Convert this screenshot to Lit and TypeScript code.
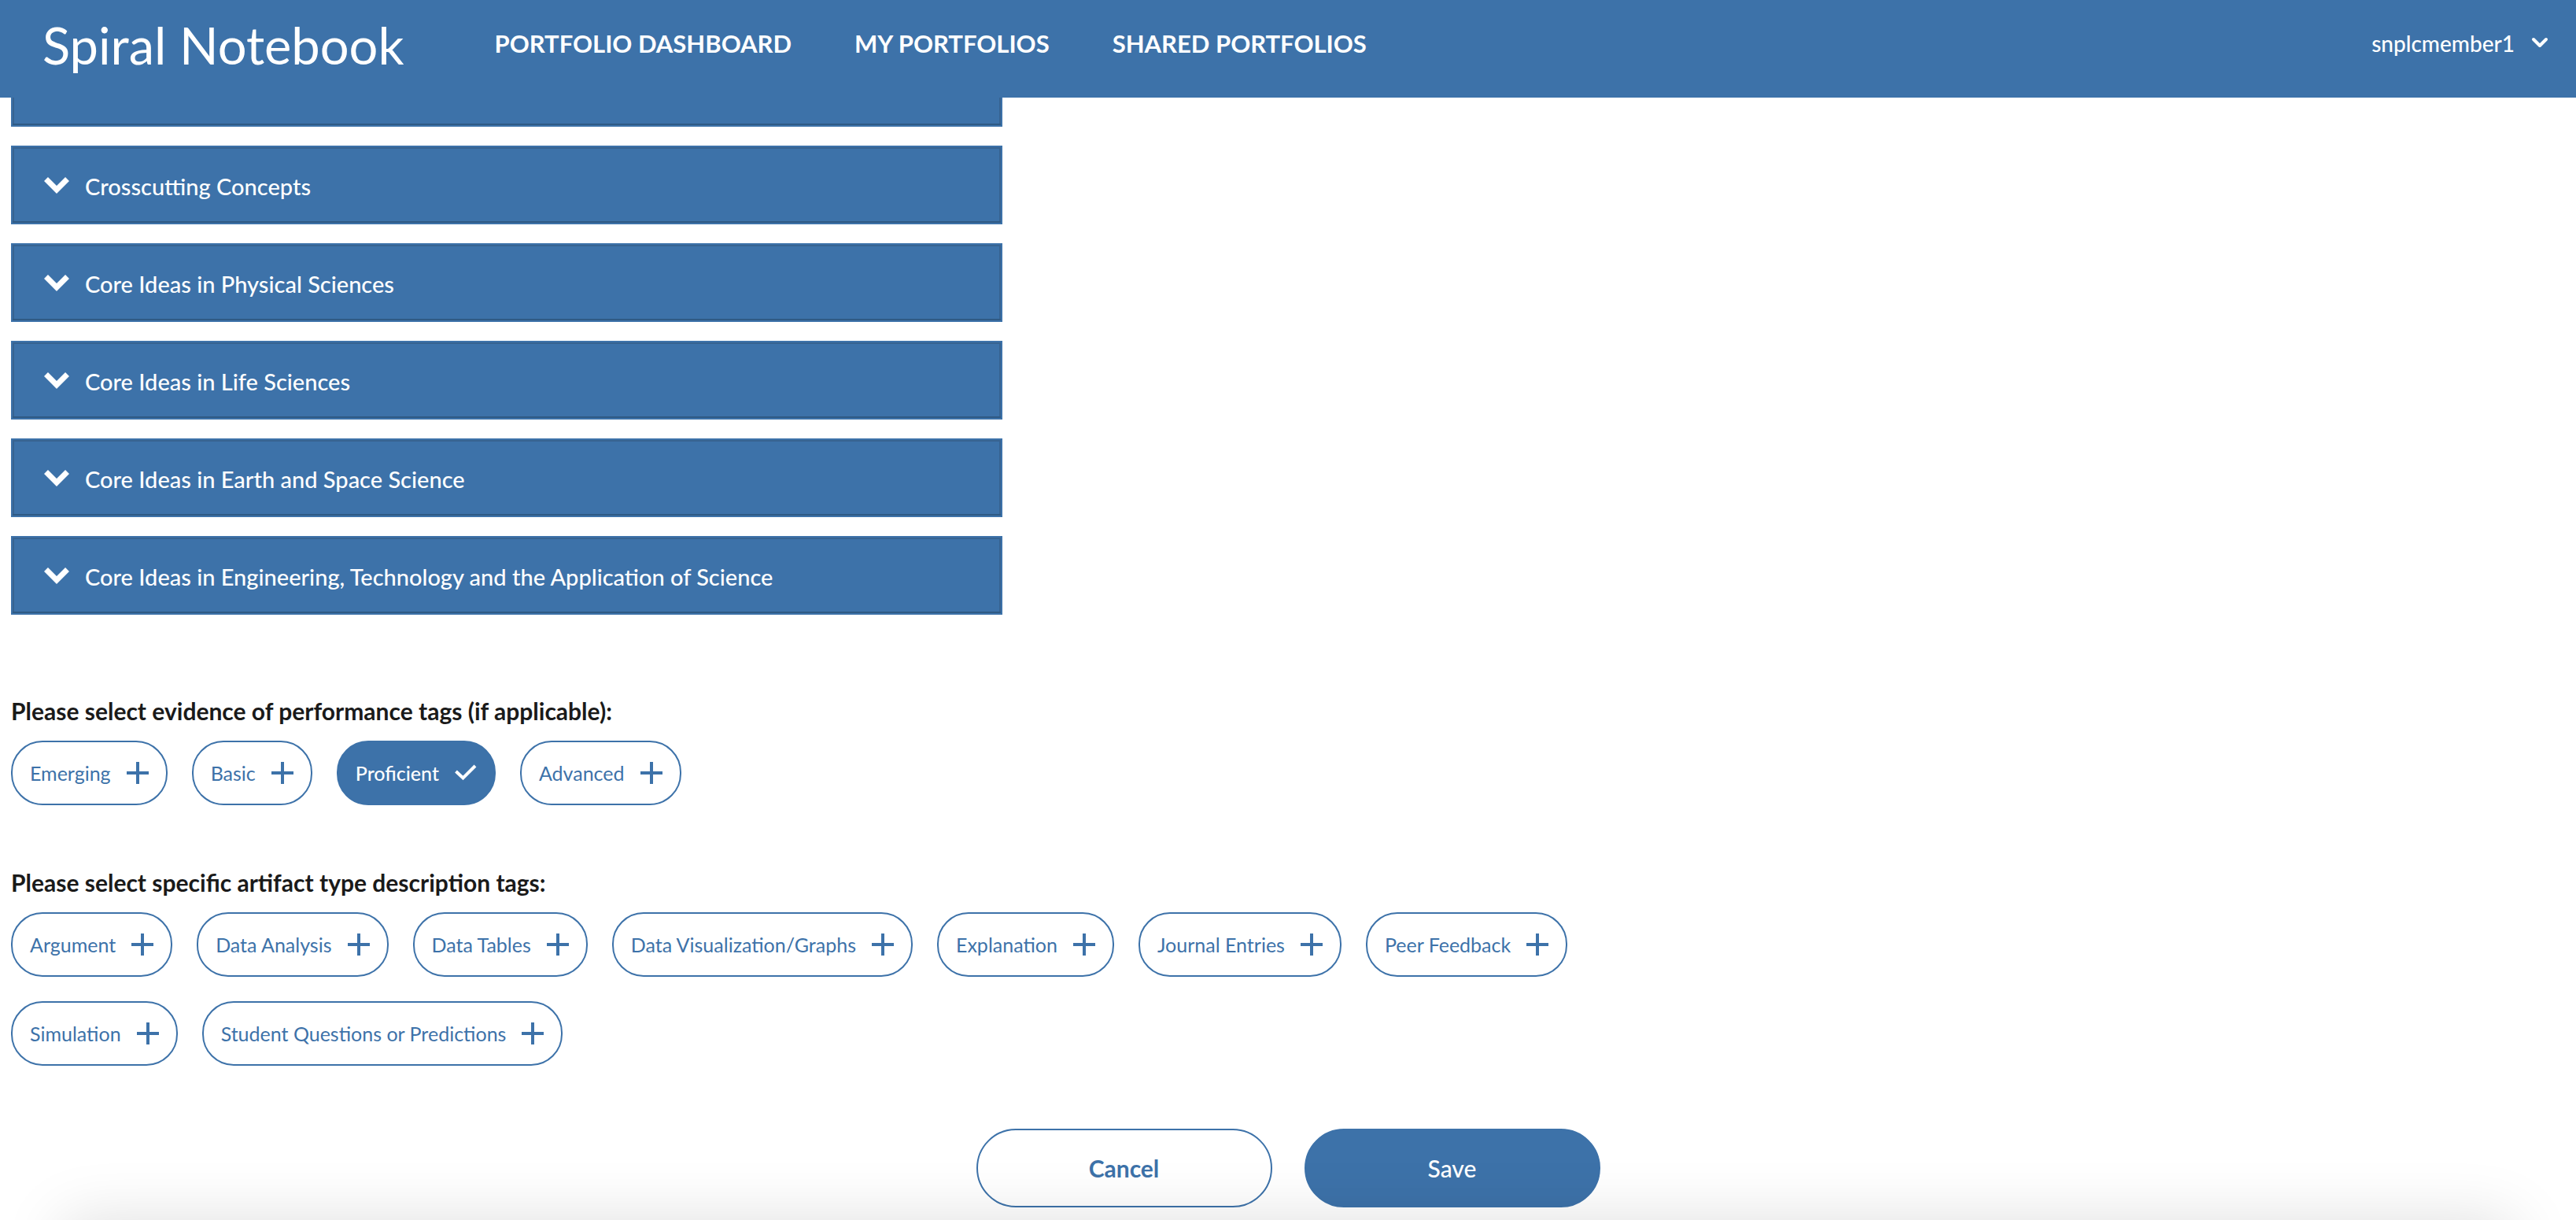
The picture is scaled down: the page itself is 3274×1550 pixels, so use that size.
import { LitElement, html, css, svg } from "lit";
import { customElement, property, state } from "lit/decorators.js";
import { classMap } from "lit/directives/class-map.js";

const plusIcon = svg`<path d="M14 0v28M0 14h28" />`;
const checkIcon = svg`<path d="M1.5 12l9 8.500L26 5" />`;

@customElement("site-header")
export class SiteHeader extends LitElement {
  static styles = css`
    :host {
      display: block;
    }
    .bar {
      display: flex;
      align-items: center;
      box-sizing: border-box;
      height: 124px;
      padding: 0 34px 14px 54px;
      background: var(--brand);
      color: #fff;
    }
    .brand {
      padding-top: 4px;
      font-size: 65px;
      line-height: 76px;
      color: inherit;
      text-decoration: none;
    }
    .nav {
      display: flex;
      gap: 80px;
      margin-left: 115px;
    }
    .link {
      font-size: 31px;
      font-weight: 700;
      line-height: 38px;
      color: inherit;
      text-decoration: none;
      text-transform: uppercase;
    }
    .user {
      display: flex;
      align-items: center;
      gap: 20px;
      margin-left: auto;
      padding: 0;
      border: 0;
      background: none;
      color: inherit;
      font: inherit;
      font-size: 28px;
      font-weight: 500;
      line-height: 38px;
      cursor: pointer;
    }
    .caret {
      width: 24px;
      height: 16px;
      fill: none;
      stroke: currentColor;
      stroke-width: 4;
      stroke-linecap: round;
      stroke-linejoin: round;
    }
  `;

  render() {
    return html`
      <header class="bar">
        <a class="brand" href="#">Spiral Notebook</a>
        <nav class="nav">
          <a class="link" href="#">Portfolio Dashboard</a>
          <a class="link" href="#">My Portfolios</a>
          <a class="link" href="#">Shared Portfolios</a>
        </nav>
        <button class="user" type="button">
          snplcmember1
          <svg class="caret" viewBox="0 0 24 16" aria-hidden="true">
            <path d="M4 3l8 8 8-8" />
          </svg>
        </button>
      </header>
    `;
  }
}

@customElement("tag-group")
export class TagGroup extends LitElement {
  @property() heading = "";
  @property({ attribute: false }) tags: string[] = [];
  @property({ attribute: false }) selected: string[] = [];

  static styles = css`
    :host {
      display: block;
    }
    .heading {
      margin: 0 0 20px;
      font-size: 30px;
      font-weight: 700;
      line-height: 36px;
      color: #1a1a1a;
    }
    .tags {
      display: flex;
      flex-wrap: wrap;
      gap: 31px;
      max-width: 64%;
    }
    .tag {
      display: flex;
      align-items: center;
      gap: 20px;
      box-sizing: border-box;
      height: 82px;
      padding: 0 22px;
      border: 2px solid var(--brand);
      border-radius: 40px;
      background: #fff;
      color: var(--brand);
      font: inherit;
      font-size: 25px;
      line-height: 30px;
      cursor: pointer;
    }
    .on {
      background: var(--brand);
      color: #fff;
      font-weight: 500;
    }
    .icon {
      flex: none;
      width: 28px;
      height: 28px;
      fill: none;
      stroke: currentColor;
      stroke-width: 4;
    }
  `;

  private toggle(tag: string) {
    this.selected = this.selected.includes(tag)
      ? this.selected.filter((t) => t !== tag)
      : [...this.selected, tag];
  }

  render() {
    return html`
      <h2 class="heading">${this.heading}</h2>
      <div class="tags">
        ${this.tags.map((tag) => {
          const on = this.selected.includes(tag);
          return html`
            <button
              type="button"
              class=${classMap({ tag: true, on })}
              aria-pressed=${on ? "true" : "false"}
              @click=${() => this.toggle(tag)}
            >
              ${tag}
              <svg class="icon" viewBox="0 0 28 28" aria-hidden="true">
                ${on ? checkIcon : plusIcon}
              </svg>
            </button>
          `;
        })}
      </div>
    `;
  }
}

@customElement("app-root")
export class AppRoot extends LitElement {
  @state() private sections = [
    "Crosscutting Concepts",
    "Core Ideas in Physical Sciences",
    "Core Ideas in Life Sciences",
    "Core Ideas in Earth and Space Science",
    "Core Ideas in Engineering, Technology and the Application of Science",
  ];

  static styles = css`
    :host {
      --brand: #3d72a9;
      --edge: #376391;
      --edge-dark: #2f5a84;
      display: block;
      background: #fff;
      font-family: Lato, "Liberation Sans", sans-serif;
    }
    .main {
      display: flex;
      flex-direction: column;
      padding: 0 14px 16px;
    }
    .sections {
      display: flex;
      flex-direction: column;
      gap: 24px;
      max-width: 1260px;
      margin-bottom: 104px;
    }
    .tail,
    .section {
      box-sizing: border-box;
      border: 2px solid var(--brand);
      background: var(--brand);
    }
    .tail {
      height: 37px;
      border-top: 0;
      box-shadow: inset 0 -2px var(--edge-dark), inset 2px 0 var(--edge),
        inset -2px 0 var(--edge);
    }
    .section {
      display: flex;
      align-items: center;
      gap: 20px;
      width: 100%;
      height: 100px;
      padding: 0 40px;
      box-shadow: inset 0 -2px var(--edge-dark), inset 0 0 0 2px var(--edge);
      color: #fff;
      font: inherit;
      font-size: 29px;
      font-weight: 500;
      line-height: 36px;
      text-align: left;
      cursor: pointer;
    }
    .label {
      padding-top: 3px;
    }
    .chevron {
      flex: none;
      width: 32px;
      height: 21px;
      fill: none;
      stroke: currentColor;
      stroke-width: 7;
    }
    .group + .group {
      margin-top: 80px;
    }
    .actions {
      display: flex;
      justify-content: center;
      gap: 41px;
      margin-top: 80px;
    }
    .action {
      box-sizing: border-box;
      width: 376px;
      height: 100px;
      border: 2px solid var(--brand);
      border-radius: 50px;
      font: inherit;
      font-size: 30px;
      line-height: 36px;
      cursor: pointer;
    }
    .cancel {
      background: #fff;
      color: var(--brand);
      font-weight: 700;
    }
    .save {
      background: var(--brand);
      color: #fff;
      font-weight: 500;
    }
    .footer-shade {
      position: fixed;
      top: 100%;
      left: 80px;
      right: 80px;
      height: 200px;
      box-shadow: 0 0 80px rgba(0, 0, 0, 0.13);
      pointer-events: none;
    }
  `;

  render() {
    return html`
      <site-header></site-header>
      <main class="main">
        <div class="sections">
          <div class="tail"></div>
          ${this.sections.map(
            (name) => html`
              <button class="section" type="button" aria-expanded="false">
                <svg class="chevron" viewBox="0 0 32 21" aria-hidden="true">
                  <path d="M2.500 2.500L16 16 29.500 2.500" />
                </svg>
                <span class="label">${name}</span>
              </button>
            `
          )}
        </div>
        <tag-group
          class="group"
          heading="Please select evidence of performance tags (if applicable):"
          .tags=${["Emerging", "Basic", "Proficient", "Advanced"]}
          .selected=${["Proficient"]}
        ></tag-group>
        <tag-group
          class="group"
          heading="Please select specific artifact type description tags:"
          .tags=${[
            "Argument",
            "Data Analysis",
            "Data Tables",
            "Data Visualization/Graphs",
            "Explanation",
            "Journal Entries",
            "Peer Feedback",
            "Simulation",
            "Student Questions or Predictions",
          ]}
        ></tag-group>
        <div class="actions">
          <button class="action cancel" type="button">Cancel</button>
          <button class="action save" type="button">Save</button>
        </div>
      </main>
      <div class="footer-shade"></div>
    `;
  }
}
